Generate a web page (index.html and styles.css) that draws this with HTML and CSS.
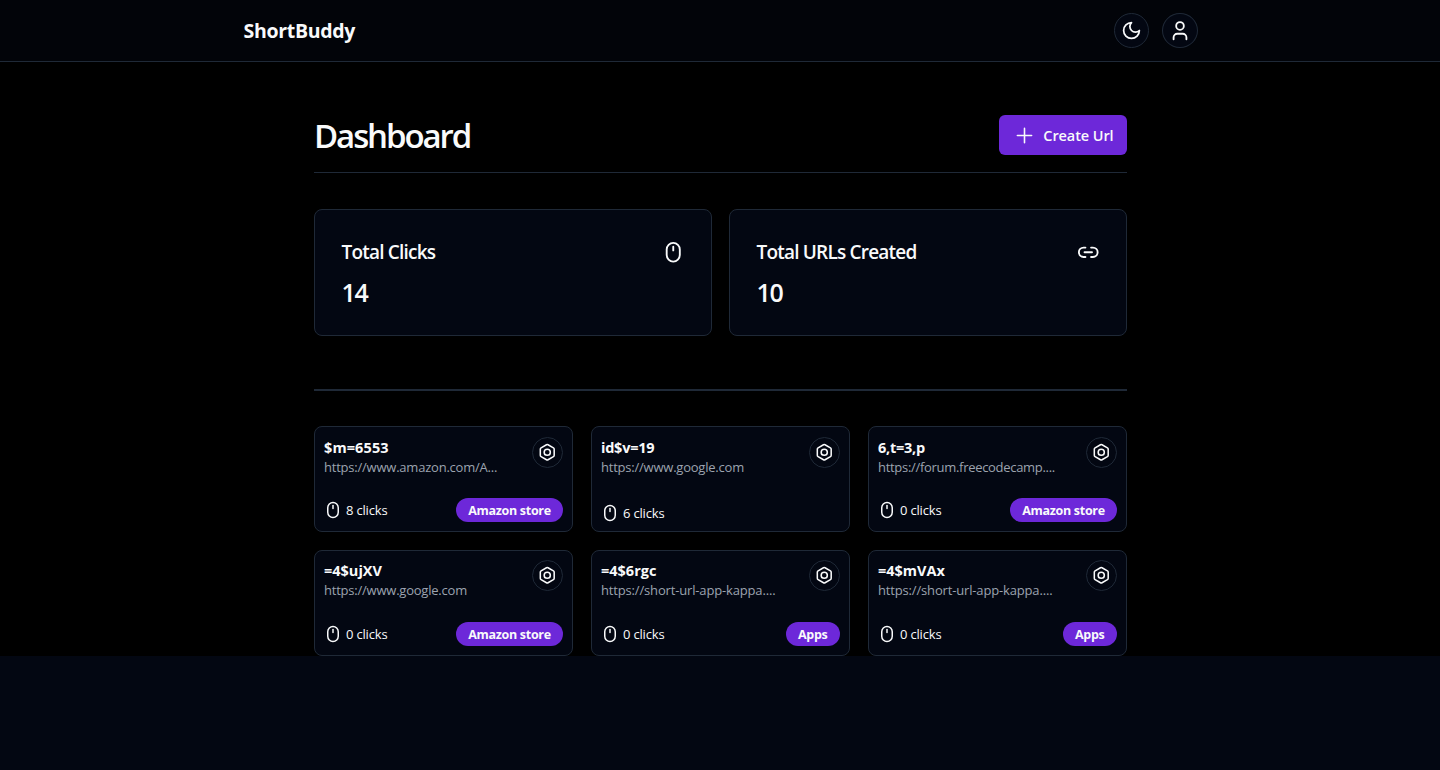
FILE: index.html
```html
<!DOCTYPE html>
<html lang="en">
<head>
<meta charset="utf-8">
<title>ShortBuddy</title>
<link rel="stylesheet" href="styles.css">
</head>
<body>
<svg class="defs" width="0" height="0">
  <symbol id="mouse" viewBox="0 0 24 24"><rect x="5" y="2" width="14" height="20" rx="7"/><path d="M12 6v4"/></symbol>
  <symbol id="link" viewBox="0 0 24 24"><path d="M9 17H7A5 5 0 0 1 7 7h2M15 7h2a5 5 0 1 1 0 10h-2M8 12h8"/></symbol>
  <symbol id="bolt" viewBox="0 0 24 24"><path d="M21 16V8a2 2 0 0 0-1-1.73l-7-4a2 2 0 0 0-2 0l-7 4A2 2 0 0 0 3 8v8a2 2 0 0 0 1 1.730l7 4a2 2 0 0 0 2 0l7-4A2 2 0 0 0 21 16z"/><circle cx="12" cy="12" r="4"/></symbol>
</svg>
<header class="topbar">
  <div class="topbar-inner">
    <a class="brand">ShortBuddy</a>
    <div class="actions">
      <button class="round"><svg class="icon" viewBox="0 0 24 24"><path d="M12 3a6 6 0 0 0 9 9 9 9 0 1 1-9-9Z"/></svg></button>
      <button class="round"><svg class="icon person" viewBox="0 0 24 24"><circle cx="12" cy="6.500" r="4.200"/><path d="M19 21v-2a4 4 0 0 0-4-4H9a4 4 0 0 0-4 4v2"/></svg></button>
    </div>
  </div>
</header>
<main class="main">
  <div class="content">
    <div class="heading">
      <h1 class="title">Dashboard</h1>
      <button class="create"><svg class="icon plus" viewBox="0 0 24 24"><path d="M3 12h18M12 3v18"/></svg><span>Create Url</span></button>
    </div>
    <section class="stats">
      <div class="stat"><div class="stat-head"><h3 class="stat-name">Total Clicks</h3><svg class="icon stat-icon"><use href="#mouse"/></svg></div><p class="stat-value">14</p></div>
      <div class="stat"><div class="stat-head"><h3 class="stat-name">Total URLs Created</h3><svg class="icon stat-icon"><use href="#link"/></svg></div><p class="stat-value">10</p></div>
    </section>
    <hr class="rule">
    <section class="links">
      <article class="card"><div class="card-top"><div><h4 class="code digits">$m=6553</h4><p class="url">https://www.amazon.com/A...</p></div><button class="settings"><svg class="icon small"><use href="#bolt"/></svg></button></div><div class="card-foot"><span class="clicks"><svg class="icon tiny"><use href="#mouse"/></svg>8 clicks</span><span class="badge">Amazon store</span></div></article>
      <article class="card"><div class="card-top"><div><h4 class="code">id$v=19</h4><p class="url">https://www.google.com</p></div><button class="settings"><svg class="icon small"><use href="#bolt"/></svg></button></div><div class="card-foot"><span class="clicks"><svg class="icon tiny"><use href="#mouse"/></svg>6 clicks</span></div></article>
      <article class="card"><div class="card-top"><div><h4 class="code">6,t=3,p</h4><p class="url tight">https://forum.freecodecamp....</p></div><button class="settings"><svg class="icon small"><use href="#bolt"/></svg></button></div><div class="card-foot"><span class="clicks"><svg class="icon tiny"><use href="#mouse"/></svg>0 clicks</span><span class="badge">Amazon store</span></div></article>
      <article class="card second"><div class="card-top"><div><h4 class="code">=4$ujXV</h4><p class="url">https://www.google.com</p></div><button class="settings"><svg class="icon small"><use href="#bolt"/></svg></button></div><div class="card-foot"><span class="clicks"><svg class="icon tiny"><use href="#mouse"/></svg>0 clicks</span><span class="badge">Amazon store</span></div></article>
      <article class="card second"><div class="card-top"><div><h4 class="code">=4$6rgc</h4><p class="url loose">https://short-url-app-kappa....</p></div><button class="settings"><svg class="icon small"><use href="#bolt"/></svg></button></div><div class="card-foot"><span class="clicks"><svg class="icon tiny"><use href="#mouse"/></svg>0 clicks</span><span class="badge short">Apps</span></div></article>
      <article class="card second"><div class="card-top"><div><h4 class="code">=4$mVAx</h4><p class="url loose">https://short-url-app-kappa....</p></div><button class="settings"><svg class="icon small"><use href="#bolt"/></svg></button></div><div class="card-foot"><span class="clicks"><svg class="icon tiny"><use href="#mouse"/></svg>0 clicks</span><span class="badge short">Apps</span></div></article>
    </section>
  </div>
</main>
</body>
</html>
```
FILE: styles.css
```css
* { box-sizing: border-box; margin: 0; padding: 0; }
body { background: #030712; color: #f9fafb; font-family: "Segoe UI", "Open Sans", "Noto Sans", sans-serif; overflow: hidden; min-height: 770px; }
button { font: inherit; color: inherit; background: none; border: 0; }
.defs { display: block; position: absolute; }
.icon { width: 21px; height: 21px; fill: none; stroke: currentColor; stroke-width: 2; stroke-linecap: round; stroke-linejoin: round; flex: none; }
.topbar { height: 62px; background: #020409; border-bottom: 1px solid #1f2937; }
.topbar-inner { width: 955px; margin: 0 auto; height: 61px; display: flex; align-items: center; justify-content: space-between; }
.brand { padding-left: 1px; font-size: 19.5px; font-weight: 700; letter-spacing: -0.3px; line-height: 28px; }
.actions { display: flex; gap: 13px; align-items: center; }
.round { width: 35px; height: 35px; border: 1px solid #1f2937; border-radius: 50%; background: #030712; display: flex; align-items: center; justify-content: center; }
.round + .round { width: 36px; }
.person { width: 22px; height: 22px; }
.main { background: #000; height: 594px; padding: 53px 313px 0 314px; }
.heading { height: 58px; display: flex; justify-content: space-between; align-items: flex-start; border-bottom: 1px solid #1f2937; }
.title { font-size: 33px; line-height: 41px; font-weight: 600; letter-spacing: -2.1px; }
.create { width: 128px; height: 40px; border-radius: 6px; background: #6d28d9; display: flex; align-items: center; justify-content: flex-end; padding-right: 13.5px; gap: 9.5px; font-size: 14.5px; font-weight: 600; letter-spacing: -0.1px; white-space: nowrap; }
.plus { width: 19px; height: 19px; }
.stats { margin-top: 36px; display: grid; grid-template-columns: 1fr 1fr; gap: 17px; }
.stat { height: 127px; padding: 27px 26.5px; border: 1px solid #1f2937; border-radius: 8px; background: #030712; }
.stat-head { display: flex; align-items: center; justify-content: space-between; height: 30px; }
.stat-name { font-size: 19px; line-height: 30px; font-weight: 600; letter-spacing: -0.8px; }
.stat-icon { width: 22.5px; height: 22.5px; }
.stat-value { margin-top: 7px; font-size: 25px; line-height: 36px; font-weight: 600; letter-spacing: -1.2px; }
.rule { margin-top: 53px; border: 0; height: 2px; background: #1f2937; }
.links { margin-top: 35px; display: grid; grid-template-columns: repeat(3, 1fr); gap: 18px; }
.card { height: 106px; padding: 9px; border: 1px solid #1f2937; border-radius: 8px; background: #030712; display: flex; flex-direction: column; justify-content: space-between; }
.card-top { display: flex; justify-content: space-between; }
.code { padding-top: 1px; font-size: 14.5px; line-height: 21px; font-weight: 700; letter-spacing: -0.25px; }
.digits { letter-spacing: 0.1px; }
.second .code { padding-top: 0; letter-spacing: 0; }
.url { font-size: 13px; line-height: 18px; letter-spacing: -0.22px; color: #9ca3af; white-space: nowrap; }
.tight { letter-spacing: -0.3px; }
.loose { letter-spacing: -0.16px; }
.settings { width: 31px; height: 31px; margin-top: 1px; border: 1px solid #1f2937; border-radius: 50%; display: flex; align-items: center; justify-content: center; }
.second .settings { margin-top: 0; }
.small { width: 18.5px; height: 18.5px; }
.card-foot { display: flex; justify-content: space-between; align-items: center; }
.clicks { display: flex; align-items: center; gap: 4px; font-size: 13px; line-height: 18px; letter-spacing: -0.18px; }
.tiny { width: 18px; height: 18px; }
.badge { width: 107px; height: 24px; border-radius: 12px; background: #6d28d9; font-size: 12.5px; line-height: 25px; font-weight: 700; letter-spacing: -0.3px; text-align: center; white-space: nowrap; }
.short { width: 54.5px; }
```
